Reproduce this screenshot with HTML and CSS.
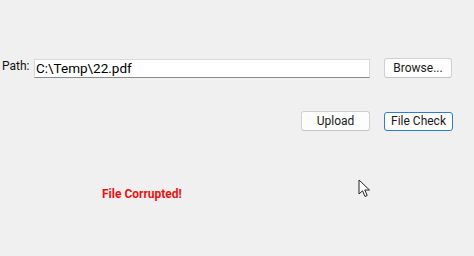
FILE: index.html
```html
<!DOCTYPE html>
<html>
<head>
<meta charset="utf-8">
<link rel="stylesheet" href="styles.css">
</head>
<body>
<div class="form">
  <div class="row path-row">
    <label class="label">Path:</label>
    <div class="textbox">C:\Temp\22.pdf</div>
    <button class="btn browse">Browse...</button>
  </div>
  <div class="row action-row">
    <button class="btn upload">Upload</button>
    <button class="btn check">File Check</button>
  </div>
  <div class="status">File Corrupted!</div>
</div>
<svg class="cursor" width="14" height="20" viewBox="0 0 14 20">
  <path d="M1 1 L1 15 L4.5 11.8 L7 17.5 L9.2 16.5 L6.8 11 L11.5 11 Z" fill="#fff" stroke="#222" stroke-width="1" stroke-linejoin="miter"/>
</svg>
</body>
</html>
```
FILE: styles.css
```css
html, body {
  margin: 0;
  padding: 0;
  background: #f0f0f0;
  width: 474px;
  height: 256px;
  overflow: hidden;
  font-family: Roboto, "Noto Sans", sans-serif;
}
.form {
  padding-top: 58px;
  display: flex;
  flex-direction: column;
}
.row {
  display: flex;
  align-items: center;
  height: 20px;
}
.label {
  width: 34px;
  padding-left: 2px;
  box-sizing: border-box;
  font-size: 12px;
  color: #111;
  position: relative;
  top: -2px;
}
.textbox {
  width: 336px;
  height: 19px;
  box-sizing: border-box;
  background: #fff;
  border: 1px solid #d9d9d9;
  border-bottom-color: #8a8a8a;
  font-size: 13.5px;
  line-height: 17px;
  padding-left: 1px;
  color: #000;
}
.btn {
  height: 20px;
  width: 68px;
  box-sizing: border-box;
  background: #fdfdfd;
  border: 1px solid #d0d0d0;
  border-bottom-color: #c4c4c4;
  border-radius: 3px;
  font-family: inherit;
  font-size: 12px;
  color: #1a1a1a;
  padding: 0;
  line-height: 17px;
}
.browse {
  margin-left: 14px;
}
.action-row {
  margin-top: 33px;
  padding-left: 301px;
}
.upload {
  width: 69px;
}
.check {
  width: 69px;
  margin-left: 14px;
  border-color: #2a7fd4;
  height: 19px;
}
.status {
  margin-top: 56px;
  padding-left: 102px;
  font-size: 12px;
  font-weight: bold;
  color: #ee1111;
}
.cursor {
  position: absolute;
  left: 358px;
  top: 179px;
}
```
